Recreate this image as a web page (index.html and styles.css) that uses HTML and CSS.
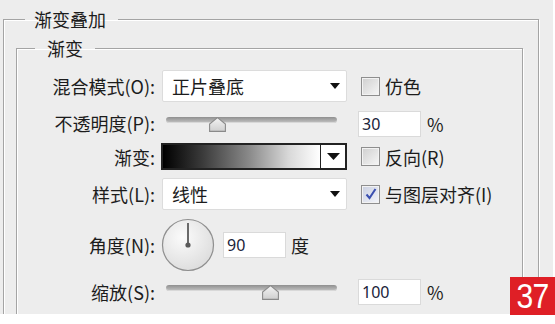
FILE: index.html
```html
<!DOCTYPE html>
<html lang="zh-CN">
<head>
<meta charset="utf-8">
<link rel="stylesheet" href="styles.css">
</head>
<body>
<div class="page">
  <div class="panel">
    <fieldset class="group outer">
      <legend class="outer-title">渐变叠加</legend>
      <fieldset class="group inner">
        <legend class="inner-title">渐变</legend>
        <div class="form">
          <div class="label">混合模式(O):</div>
          <div class="select"><span>正片叠底</span><svg class="arrow" width="10" height="6" viewBox="0 0 10 6"><path d="M0 0H10L5 6Z" fill="#111"/></svg></div>
          <label class="check"><span class="box"></span><span>仿色</span></label>

          <div class="label">不透明度(P):</div>
          <div class="slider"><div class="track"></div><svg class="thumb" style="left:30%" width="17" height="15" viewBox="0 0 17 15"><defs><linearGradient id="tg1" x1="0" y1="0" x2="0" y2="1"><stop offset="0" stop-color="#f4f4f4"/><stop offset="1" stop-color="#cfcfcf"/></linearGradient></defs><path d="M8.5 0.6L16.4 7V14.4H0.6V7Z" fill="url(#tg1)" stroke="#8a8a8a" stroke-width="1.1"/></svg></div>
          <div class="field top1"><div class="num">30</div><span class="unit">%</span></div>

          <div class="label">渐变:</div>
          <div class="gradient"><div class="ramp"></div><div class="gbtn"><svg width="13" height="7" viewBox="0 0 13 7"><path d="M0 0H13L6.5 7Z" fill="#111"/></svg></div></div>
          <label class="check"><span class="box"></span><span>反向(R)</span></label>

          <div class="label">样式(L):</div>
          <div class="select"><span>线性</span><svg class="arrow" width="10" height="6" viewBox="0 0 10 6"><path d="M0 0H10L5 6Z" fill="#111"/></svg></div>
          <label class="check"><span class="box checked"><svg width="14" height="14" viewBox="0 0 14 14"><path d="M2.5 7.5L5.5 11L11.5 2" fill="none" stroke="#3a4fb0" stroke-width="2"/></svg></span><span>与图层对齐(I)</span></label>

          <div class="label">角度(N):</div>
          <div class="angle">
            <svg class="dial" width="54" height="54" viewBox="0 0 54 54"><defs><radialGradient id="dg" cx="0.4" cy="0.35" r="0.7"><stop offset="0" stop-color="#fbfbfb"/><stop offset="1" stop-color="#dcdcdc"/></radialGradient></defs><circle cx="27" cy="27" r="25.5" fill="url(#dg)" stroke="#8f8f8f" stroke-width="1.2"/><line x1="27" y1="27" x2="27" y2="5" stroke="#6a6a6a" stroke-width="2"/><circle cx="27" cy="27" r="2.6" fill="#5a5a5a"/></svg>
            <div class="num">90</div><span class="unit">度</span>
          </div>
          <div></div>

          <div class="label">缩放(S):</div>
          <div class="slider s2"><div class="track"></div><svg class="thumb" style="left:61%" width="17" height="15" viewBox="0 0 17 15"><defs><linearGradient id="tg2" x1="0" y1="0" x2="0" y2="1"><stop offset="0" stop-color="#f4f4f4"/><stop offset="1" stop-color="#cfcfcf"/></linearGradient></defs><path d="M8.5 0.6L16.4 7V14.4H0.6V7Z" fill="url(#tg2)" stroke="#8a8a8a" stroke-width="1.1"/></svg></div>
          <div class="field"><div class="num">100</div><span class="unit">%</span></div>
        </div>
      </fieldset>
    </fieldset>
  </div>
  <div class="badge"><span>37</span></div>
</div>
</body>
</html>
```

FILE: styles.css
```css
html, body {
  margin: 0;
  padding: 0;
  background: #ffffff;
}
.page {
  position: relative;
  width: 555px;
  height: 324px;
  overflow: hidden;
  background: #ffffff;
  font-family: "Noto Sans CJK SC", "Noto Sans", sans-serif;
  color: #1c1c1c;
  font-size: 18px;
}
.panel {
  width: 553px;
  height: 314px;
  overflow: hidden;
  background: #ededed;
  padding-top: 9px;
  box-sizing: border-box;
}
.group {
  margin: 0;
  padding: 0;
  min-width: 0;
  box-sizing: border-box;
  border: 1px solid #a4a4a4;
  box-shadow: inset 1px 1px 0 #ffffff, 1px 1px 0 #ffffff;
}
.group legend {
  line-height: 20px;
  height: 20px;
  font-size: 18px;
}
.outer {
  margin-left: 3px;
  width: 536px;
  padding-bottom: 30px;
}
.outer-title {
  margin-left: 21px;
  padding: 0 12px 0 9px;
}
.inner {
  margin-left: 12px;
  margin-top: 9px;
  width: 507px;
  padding-top: 12px;
  padding-bottom: 30px;
}
.inner-title {
  margin-left: 18px;
  padding: 0 12px 0 12px;
}
.form {
  display: grid;
  grid-template-columns: 138px 185px 1fr;
  grid-template-rows: 32px 25px 27px 32px 53px 26px;
  column-gap: 7px;
  row-gap: 8px;
  align-items: center;
}
.label {
  text-align: right;
  line-height: 20px;
  white-space: nowrap;
}
.select {
  height: 32px;
  box-sizing: border-box;
  background: #ffffff;
  border: 1px solid #dcdcdc;
  border-radius: 2px;
  display: flex;
  align-items: center;
  justify-content: space-between;
  padding: 0 6px 0 9px;
}
.select span {
  line-height: 20px;
}
.arrow {
  display: block;
}
.check {
  display: flex;
  align-items: center;
  gap: 5px;
  margin-left: 7px;
  line-height: 20px;
  white-space: nowrap;
}
.box {
  width: 19px;
  height: 19px;
  box-sizing: border-box;
  border: 1px solid #8e8e8e;
  background: linear-gradient(135deg, #cfcfcf, #f6f6f6);
  box-shadow: inset 0 0 0 1px #f2f2f2;
  display: flex;
  align-items: center;
  justify-content: center;
}
.box.checked {
  background: linear-gradient(135deg, #c9cfe0, #f4f5fa);
}
.slider {
  position: relative;
  height: 25px;
  margin-left: 4px;
  width: 171px;
}
.track {
  margin-top: 7px;
  height: 6px;
  border-radius: 3px;
  background: linear-gradient(#8f8f8f, #c4c4c4);
  box-shadow: inset 0 -1px 0 #d8d8d8;
}
.thumb {
  position: absolute;
  top: 7px;
  margin-left: -8.5px;
  display: block;
}
.s2 {
  height: 26px;
}
.s2 .track {
  margin-top: 6px;
}
.s2 .thumb {
  top: 6px;
}
.field {
  display: flex;
  align-items: center;
  gap: 6px;
  margin-left: 4px;
}
.field.top1 {
  align-self: start;
  margin-top: 1px;
}
.num {
  width: 63px;
  height: 26px;
  box-sizing: border-box;
  background: #ffffff;
  border: 1px solid #dadada;
  font-family: "Noto Sans", sans-serif;
  font-size: 16px;
  line-height: 24px;
  padding-left: 3px;
  color: #20233a;
}
.unit {
  line-height: 20px;
}
.gradient {
  height: 27px;
  box-sizing: border-box;
  margin-left: -1px;
  border: 2px solid #222222;
  display: flex;
  background: #ffffff;
}
.ramp {
  flex: 1;
  background: linear-gradient(to right, #000000 0%, #3a3a3a 25%, #8a8a8a 55%, #d8d8d8 80%, #ffffff 100%);
  border-right: 1px solid #222222;
}
.gbtn {
  width: 24px;
  display: flex;
  align-items: center;
  justify-content: center;
  background: #ffffff;
}
.angle {
  display: flex;
  align-items: center;
  margin-left: -1px;
}
.dial {
  display: block;
  margin-right: 8px;
}
.angle .unit {
  margin-left: 5px;
}
.badge {
  position: absolute;
  left: 510px;
  top: 277px;
  width: 45px;
  height: 38px;
  background: #df1f26;
  color: #ffffff;
  font-family: "Liberation Sans", sans-serif;
  font-size: 35px;
  line-height: 38px;
  display: flex;
  justify-content: center;
}
.badge span {
  display: block;
  transform: scaleX(0.86);
  letter-spacing: -1px;
}
```
